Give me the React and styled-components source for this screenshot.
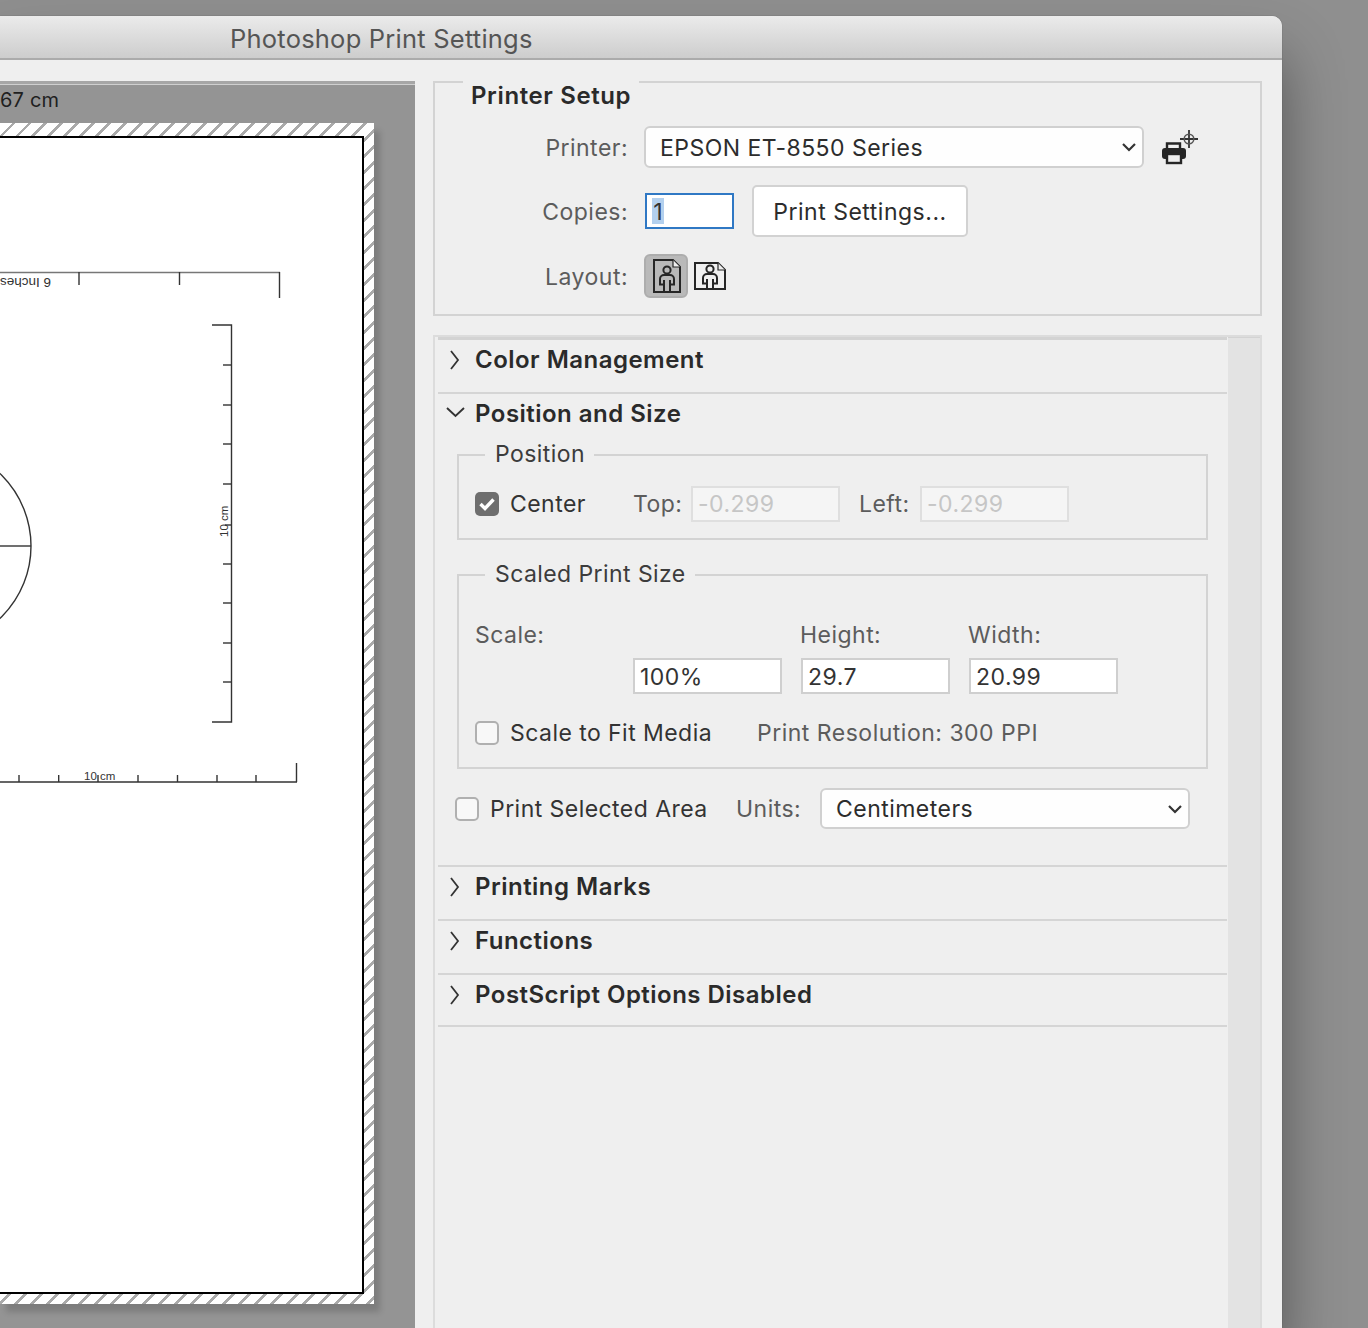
import React from "react";
import styled, { createGlobalStyle } from "styled-components";

const Global = createGlobalStyle`
  html, body { margin: 0; padding: 0; height: 1328px; overflow: hidden; background: #8f8f8f; }
  body { font-family: Inter, "Noto Sans", sans-serif; }
  * { box-sizing: border-box; }
`;

const Desk = styled.div`
  width: 1368px; height: 1328px; padding-top: 16px; overflow: hidden; background: #8f8f8f;
`;
const Win = styled.div`
  width: 1282px; height: 1312px; background: #efefef; border-top-right-radius: 10px;
  box-shadow: 0 40px 60px rgba(0,0,0,.42), 0 0 1px rgba(0,0,0,.5);
  display: flex; flex-direction: column;
`;
const TitleBar = styled.div`
  height: 44px; flex: none; padding-left: 230px; border-top-right-radius: 10px;
  background: linear-gradient(#ebebeb, #cdcdcd); border-bottom: 2px solid #ababab;
  font-size: 25.5px; line-height: 46px; color: #555; letter-spacing: .22px;
`;
const Body = styled.div`flex: 1; display: flex; padding-top: 21px; min-height: 0;`;
const Preview = styled.div`
  width: 415px; flex: none; background: #949494; padding-right: 41px; overflow: hidden;
  border-top: 3px solid #a6a6a6; box-shadow: inset 0 1px 0 #cfcfcf;
`;
const SizeText = styled.div`
  height: 39px; font-size: 20px; line-height: 32px; color: #1f1f1f; letter-spacing: .2px;
`;
const Paper = styled.div`
  width: 374px; height: 1181px; padding: 13px 10px 10px 0;
  background: repeating-linear-gradient(135deg, #fff 0 8.5px, #aaa 8.5px 11.3px);
  box-shadow: 6px 8px 6px rgba(0,0,0,.16);
`;
const Sheet = styled.div`
  width: 364px; height: 1158px; background: #fff;
  border: 2px solid #000; border-left: none; overflow: hidden;
`;
const Drawing = styled.svg`display: block;`;

const Side = styled.div`
  flex: 1; padding: 0 20px 0 18px; display: flex; flex-direction: column; min-width: 0;
`;
const SetupBox = styled.section`
  height: 235px; flex: none; border: 2px solid #d3d3d3; margin-bottom: 19px;
`;
const BoldLegend = styled.h2`
  display: block; width: fit-content; margin: -2px 0 15px 28px; padding: 0 8px; height: 30px;
  background: #efefef; font-size: 24px; line-height: 30px; font-weight: 600; color: #2a2a2a;
  letter-spacing: .62px;
`;
const Row = styled.div`
  display: flex; align-items: center; height: ${p => p.$h}px; margin-bottom: 17px;
`;
const RowLabel = styled.div`
  width: 193px; margin-right: 16px; padding-top: 2px; text-align: right; flex: none;
  font-size: 23px; color: #5c5c5c; letter-spacing: .47px;
`;
const Select = styled.div`
  width: ${p => p.$w}px; height: ${p => p.$hh}px; flex: none; background: #fefefe;
  border: 2px solid #d0d0d0; border-radius: 6px; display: flex; align-items: center;
  justify-content: space-between; padding: 0 5px 0 14px;
  font-size: 23px; color: #2c2c2c; letter-spacing: .47px;
`;
const SelectValue = styled.span`padding-top: ${p => p.$pt || 0}px;`;
const CopyField = styled.div`
  width: 89px; height: 36px; margin-left: 1px; background: #fff; border: 2px solid #2f78c4;
  padding: 3px 0 3px 5px; display: flex; font-size: 23px; color: #333;
`;
const Selection = styled.span`
  background: #b3d0ee; width: 12px; line-height: 29px; text-align: center;
`;
const PushButton = styled.div`
  width: 216px; height: 52px; margin-left: 18px; padding-top: 2px; background: #fff;
  border: 2px solid #d2d2d2; border-radius: 5px; display: flex; align-items: center;
  justify-content: center; font-size: 23px; color: #2c2c2c; letter-spacing: .5px;
`;
const PrinterGlyph = styled.svg`margin-left: 17px; display: block;`;
const LayoutBtn = styled.div`
  width: 44px; height: 44px; flex: none; border-radius: 6px; display: flex; align-items: center;
  justify-content: center; padding-left: 2px; background: ${p => p.$on ? "#b9b9b9" : "transparent"};
  border: 2px solid ${p => p.$on ? "#adadad" : "transparent"};
`;
const LayoutBtnPlain = styled.div`margin-left: 6px; display: flex; align-items: center;`;

const Panel = styled.section`
  flex: 1; display: grid; grid-template-columns: 789px 1fr; border: 2px solid #dcdcdc;
  border-bottom: none; padding-left: 3px; min-height: 0; margin-top: 0;
`;
const List = styled.div`border-top: 3px solid #d3d3d3;`;
const Gutter = styled.div`background: #e3e3e3; border-top: 1px solid #d3d3d3; margin-left: 1px;`;
const Section = styled.div`border-bottom: 2px solid #d5d5d5; padding-bottom: ${p => p.$pb || 12}px;`;
const Header = styled.div`
  height: 40px; padding-bottom: 2px; display: flex; align-items: center; font-size: 24px;
  font-weight: 600; color: #2a2a2a; letter-spacing: .48px;
`;
const Twist = styled.svg`width: 37px; margin-top: 2px; flex: none; display: block;`;
const Group = styled.fieldset`
  margin: ${p => p.$mt}px 19px 0; padding: 0 16px ${p => p.$pb}px; border: 2px solid #d3d3d3;
  min-width: 0;
`;
const GroupTitle = styled.legend`
  margin-left: 10px; padding: 0 9px 0 10px; height: 38px; line-height: 36px; font-size: 23px;
  color: #3c3c3c; letter-spacing: .42px;
`;
const CenterRow = styled.div`display: flex; align-items: center; height: 36px; margin-top: 12px;`;
const Box = styled.span`
  width: 24px; height: 24px; flex: none; border-radius: 5px; display: flex; align-items: center;
  justify-content: center; background: ${p => p.$on ? "#6e6e6e" : "#f8f8f8"};
  border: ${p => p.$on ? "none" : "2px solid #b0b0b0"};
`;
const CheckText = styled.span`
  margin-left: 11px; font-size: 23px; color: #333; letter-spacing: .45px; white-space: nowrap;
  width: ${p => p.$w ? p.$w + "px" : "auto"}; flex: none;
`;
const FieldLabel = styled.span`
  font-size: 23px; color: #5c5c5c; letter-spacing: .47px; white-space: nowrap;
  margin-left: ${p => p.$ml || 0}px; margin-right: ${p => p.$mr || 0}px;
  width: ${p => p.$w ? p.$w + "px" : "auto"}; flex: none;
`;
const ValueField = styled.div`
  width: 149px; height: 36px; flex: none; padding-left: 5px; font-size: 23px;
  line-height: ${p => p.$off ? 33 : 35}px;
  letter-spacing: .47px; color: ${p => p.$off ? "#c6c6c6" : "#333"};
  background: ${p => p.$off ? "#f5f5f5" : "#fff"};
  border: 2px solid ${p => p.$off ? "#dfdfdf" : "#cfcfcf"};
`;
const ScaleGrid = styled.div`
  display: grid; grid-template-columns: 149px 149px 149px; column-gap: 19px; padding-left: 158px;
  margin-top: 26px;
`;
const ScaleHead = styled.div`
  height: 30px; line-height: 30px; font-size: 23px; color: #5c5c5c; letter-spacing: .47px;
  margin-bottom: 8px; margin-left: -1px; white-space: nowrap;
`;
const ScaleLead = styled(ScaleHead)`margin-left: -158px; width: 100px;`;
const CheckRow = styled.div`
  display: flex; align-items: center; height: ${p => p.$h}px; margin-top: ${p => p.$mt}px;
  margin-left: ${p => p.$ml || 0}px;
`;
const Resolution = styled.span`
  font-size: 23px; color: #5c5c5c; letter-spacing: .5px; white-space: nowrap;
`;

const Chevron = () => (
  <svg width="16" height="10" viewBox="0 0 16 10" fill="none">
    <path d="M2 2 L8 8 L14 2" stroke="#333" strokeWidth="2.2" />
  </svg>
);
const Right = () => (
  <Twist height="22" viewBox="0 0 37 22" fill="none">
    <path d="M13 2 L20 11 L13 20" stroke="#333" strokeWidth="1.8" />
  </Twist>
);
const Down = () => (
  <Twist height="22" viewBox="0 0 37 22" fill="none">
    <path d="M9 5 L17.5 13 L26 5" stroke="#333" strokeWidth="1.9" />
  </Twist>
);
const Tick = () => (
  <svg width="18" height="16" viewBox="0 0 18 16" fill="none">
    <path d="M2.5 8 L7 12.5 L15.5 3.5" stroke="#fff" strokeWidth="3.4" />
  </svg>
);
const Person = ({ legEnd = 32 }) => (
  <>
    <circle cx="14" cy="11" r="3.6" />
    <path d={`M10 25.5 H7 V20 a4 4 0 0 1 4 -4 h6 a4 4 0 0 1 4 4 V25.5 H18 M11 21 V${legEnd} M17 21 V${legEnd}`} />
  </>
);
const Portrait = () => (
  <svg width="28" height="34" viewBox="0 0 28 34" fill="none">
    <path d="M1 1 H20 L27 8 V33 H1 Z" stroke="#262626" strokeWidth="2" fill="none" />
    <path d="M20 1 V8 H27" stroke="#262626" strokeWidth="1.2" fill="#efefef" />
    <g stroke="#262626" strokeWidth="2" fill="none"><Person /></g>
  </svg>
);
const Landscape = () => (
  <svg width="32" height="28" viewBox="0 0 32 28" fill="none">
    <path d="M1 1 H24 L31 8 V27 H1 Z" stroke="#262626" strokeWidth="2" fill="#f1f1f1" />
    <path d="M24 1 V8 H31" stroke="#262626" strokeWidth="1.2" fill="#efefef" />
    <g transform="translate(2 -4)" stroke="#262626" strokeWidth="2" fill="none"><Person legEnd={31} /></g>
  </svg>
);
const PrinterIcon = () => (
  <PrinterGlyph width="38" height="36" viewBox="0 0 38 36" fill="none">
    <path d="M6 20 V14.5 H19 V20" stroke="#262626" strokeWidth="2.4" />
    <rect x="1" y="19" width="24" height="11" rx="3" fill="#262626" />
    <rect x="6" y="25" width="14" height="9" fill="#efefef" stroke="#262626" strokeWidth="2.4" />
    <path d="M19 10 H37 M28 1 V19" stroke="#333" strokeWidth="1.8" />
    <circle cx="28" cy="10" r="4.8" stroke="#555" strokeWidth="1.5" />
  </PrinterGlyph>
);

const xTicks = [19, 58.7, 98, 138, 177.5, 217, 256];
const yTicks = [365, 405, 444, 484, 564, 603, 643, 682];

const Page = () => (
  <Drawing width="362" height="1154" viewBox="0 138 362 1154">
    <g stroke="#333" strokeWidth="1.4" fill="none">
      <path d="M0 272.5 H280" stroke="#777" strokeWidth="1.6" />
      <path d="M79 272 V285 M179.5 272 V285 M279.5 272 V298" />
      <path d="M212 325 H231.5 V722 H212" />
      {yTicks.map(y => <path key={y} d={`M223 ${y} H231`} />)}
      <path d="M225 525 H231" />
      <circle cx="-69" cy="546" r="100" />
      <path d="M0 546 H31" />
      <path d="M0 782 H297 M296.5 782 V763" />
      {xTicks.map(x => <path key={x} d={`M${x} 782 V775`} />)}
    </g>
    <g fontFamily="'Liberation Sans', Arial, sans-serif" fontSize="13.5" fill="#333">
      <text transform="rotate(180 51 283)" x="51" y="288">6 Inches</text>
      <text transform="rotate(-90 227 522)" x="212" y="523" fontSize="11.5">10 cm</text>
      <text x="84" y="780" fontSize="11.5">10 cm</text>
    </g>
  </Drawing>
);

export default function App() {
  return (
    <Desk>
      <Global />
      <Win>
        <TitleBar>Photoshop Print Settings</TitleBar>
        <Body>
          <Preview>
            <SizeText>67 cm</SizeText>
            <Paper>
              <Sheet><Page /></Sheet>
            </Paper>
          </Preview>
          <Side>
            <SetupBox>
              <BoldLegend>Printer Setup</BoldLegend>
              <Row $h={42}>
                <RowLabel>Printer:</RowLabel>
                <Select $w={500} $hh={42}><SelectValue $pt={2}>EPSON ET-8550 Series</SelectValue><Chevron /></Select>
                <PrinterIcon />
              </Row>
              <Row $h={52}>
                <RowLabel>Copies:</RowLabel>
                <CopyField><Selection>1</Selection></CopyField>
                <PushButton>Print Settings...</PushButton>
              </Row>
              <Row $h={44}>
                <RowLabel>Layout:</RowLabel>
                <LayoutBtn $on><Portrait /></LayoutBtn>
                <LayoutBtnPlain><Landscape /></LayoutBtnPlain>
              </Row>
            </SetupBox>
            <Panel>
              <List>
                <Section><Header><Right />Color Management</Header></Section>
                <Section $pb={36}>
                  <Header><Down />Position and Size</Header>
                  <Group $mt={2} $pb={16}>
                    <GroupTitle>Position</GroupTitle>
                    <CenterRow>
                      <Box $on><Tick /></Box>
                      <CheckText $w={123}>Center</CheckText>
                      <FieldLabel $w={48} $mr={10}>Top:</FieldLabel>
                      <ValueField $off>-0.299</ValueField>
                      <FieldLabel $w={51} $ml={19} $mr={10}>Left:</FieldLabel>
                      <ValueField $off>-0.299</ValueField>
                    </CenterRow>
                  </Group>
                  <Group $mt={16} $pb={17}>
                    <GroupTitle>Scaled Print Size</GroupTitle>
                    <ScaleGrid>
                      <ScaleLead>Scale:</ScaleLead>
                      <ScaleHead>Height:</ScaleHead>
                      <ScaleHead>Width:</ScaleHead>
                      <ValueField>100%</ValueField>
                      <ValueField>29.7</ValueField>
                      <ValueField>20.99</ValueField>
                    </ScaleGrid>
                    <CheckRow $h={34} $mt={22}>
                      <Box />
                      <CheckText $w={247}>Scale to Fit Media</CheckText>
                      <Resolution>Print Resolution: 300 PPI</Resolution>
                    </CheckRow>
                  </Group>
                  <CheckRow $h={41} $mt={19} $ml={17}>
                    <Box />
                    <CheckText $w={246}>Print Selected Area</CheckText>
                    <FieldLabel $w={84}>Units:</FieldLabel>
                    <Select $w={370} $hh={41}>Centimeters<Chevron /></Select>
                  </CheckRow>
                </Section>
                <Section><Header><Right />Printing Marks</Header></Section>
                <Section><Header><Right />Functions</Header></Section>
                <Section $pb={10}><Header><Right />PostScript Options Disabled</Header></Section>
              </List>
              <Gutter />
            </Panel>
          </Side>
        </Body>
      </Win>
    </Desk>
  );
}
